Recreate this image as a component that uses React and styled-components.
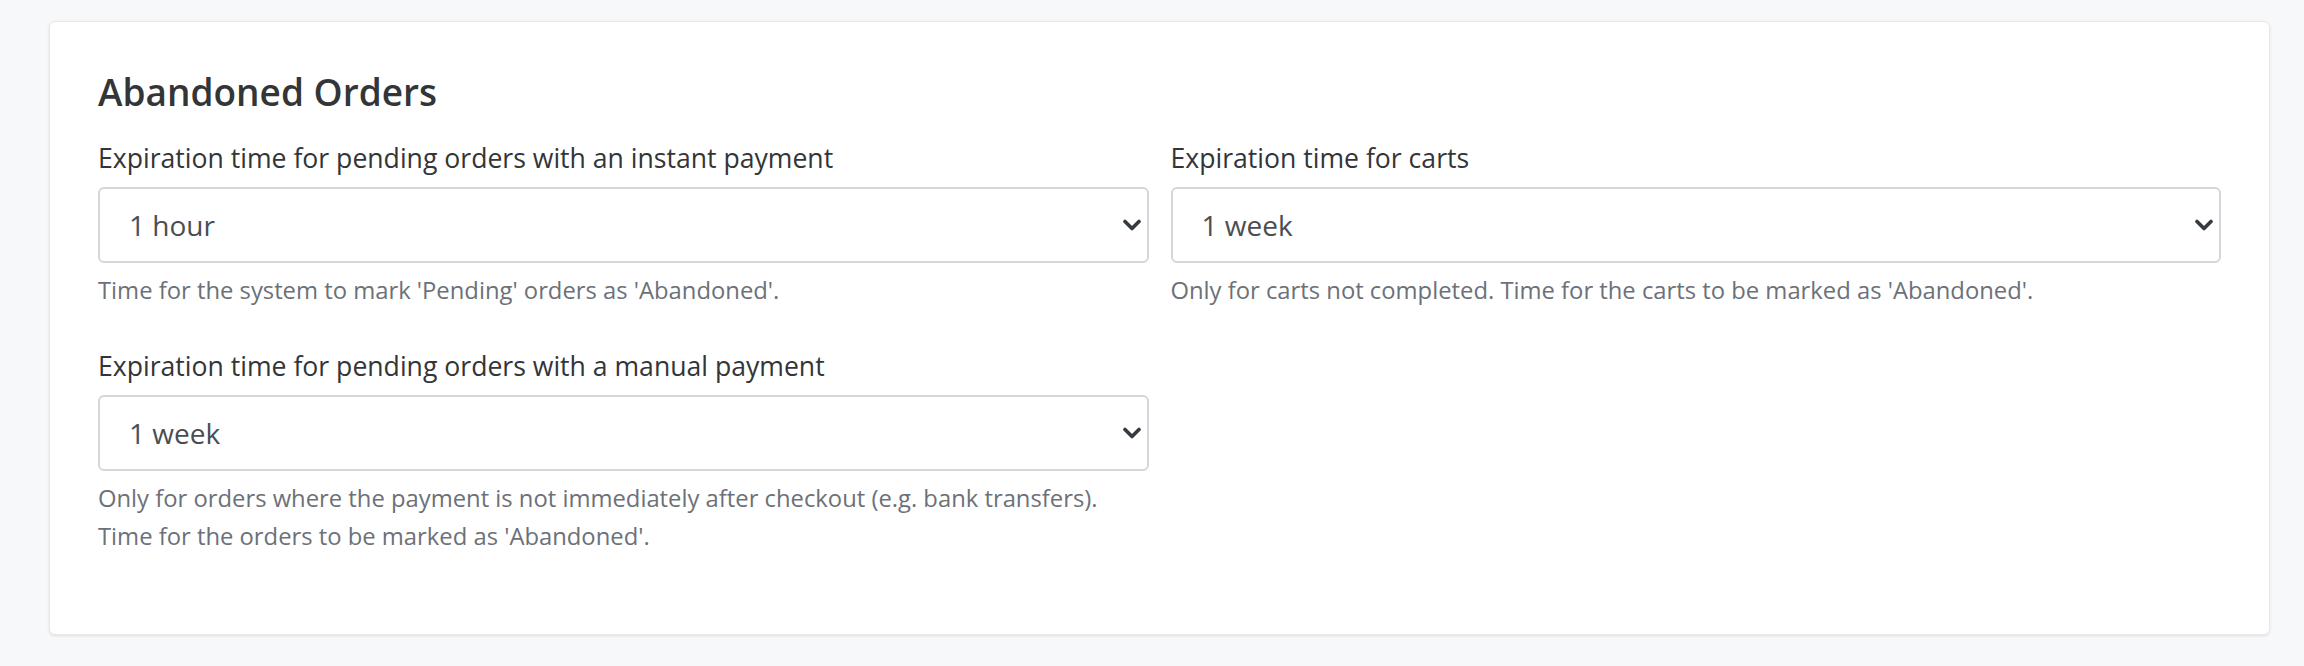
import React from "react";
import styled, { createGlobalStyle } from "styled-components";

const Global = createGlobalStyle`
  html, body { margin: 0; padding: 0; background: #f7f8fa; }
  body { font-family: "Open Sans", Lato, sans-serif; }
`;

const Page = styled.div`
  padding: 21px 34px 30px 49px;
`;

const Card = styled.section`
  box-sizing: border-box;
  width: 2221px;
  height: 614px;
  background: #fff;
  border: 1px solid #e6e8eb;
  border-radius: 6px;
  box-shadow: 0 1px 3px rgba(0, 0, 0, 0.1);
  padding: 45px 48px 0 48px;
`;

const Title = styled.h2`
  margin: 0 0 22px 0;
  font-size: 37px;
  line-height: 50px;
  font-weight: 600;
  color: #333537;
`;

const Grid = styled.div`
  display: grid;
  grid-template-columns: 1fr 1fr;
  column-gap: 22px;
  row-gap: 38px;
`;

const Field = styled.div`
  display: flex;
  flex-direction: column;
`;

const Label = styled.label`
  font-size: 26.6px;
  line-height: 38px;
  color: #333537;
`;

const SelectWrap = styled.div`
  position: relative;
  margin-top: 10px;
`;

const Select = styled.select`
  box-sizing: border-box;
  width: 100%;
  height: 76px;
  appearance: none;
  -webkit-appearance: none;
  background: #fff;
  border: 2px solid #d3d7dc;
  border-radius: 6px;
  padding: 0 60px 0 29px;
  font-family: "Open Sans", Lato, sans-serif;
  font-size: 28px;
  color: #4a4e53;
  outline: none;
`;

const Chevron = styled.svg`
  position: absolute;
  right: 8px;
  top: 50%;
  width: 18px;
  height: 12px;
  margin-top: -6px;
  pointer-events: none;
`;

const Help = styled.p`
  margin: 8px 0 0 0;
  font-size: 23.8px;
  line-height: 38px;
  color: #6c7179;
`;

const fields = [
  {
    label: "Expiration time for pending orders with an instant payment",
    value: "1 hour",
    help: ["Time for the system to mark 'Pending' orders as 'Abandoned'."],
  },
  {
    label: "Expiration time for carts",
    value: "1 week",
    help: ["Only for carts not completed. Time for the carts to be marked as 'Abandoned'."],
  },
  {
    label: "Expiration time for pending orders with a manual payment",
    value: "1 week",
    help: [
      "Only for orders where the payment is not immediately after checkout (e.g. bank transfers).",
      "Time for the orders to be marked as 'Abandoned'.",
    ],
  },
];

const options = ["1 hour", "6 hours", "12 hours", "1 day", "3 days", "1 week", "2 weeks"];

export default function App() {
  return (
    <Page>
      <Global />
      <Card>
        <Title>Abandoned Orders</Title>
        <Grid>
          {fields.map((f, i) => (
            <Field key={i}>
              <Label>{f.label}</Label>
              <SelectWrap>
                <Select defaultValue={f.value}>
                  {options.map((o) => (
                    <option key={o}>{o}</option>
                  ))}
                </Select>
                <Chevron viewBox="0 0 18 12" fill="none">
                  <path d="M2 2.5 L9 9.5 L16 2.5" stroke="#343a40" strokeWidth="3.6" strokeLinecap="round" strokeLinejoin="round" />
                </Chevron>
              </SelectWrap>
              <Help>
                {f.help.map((h, j) => (
                  <React.Fragment key={j}>
                    {j > 0 && <br />}
                    {h}
                  </React.Fragment>
                ))}
              </Help>
            </Field>
          ))}
        </Grid>
      </Card>
    </Page>
  );
}
